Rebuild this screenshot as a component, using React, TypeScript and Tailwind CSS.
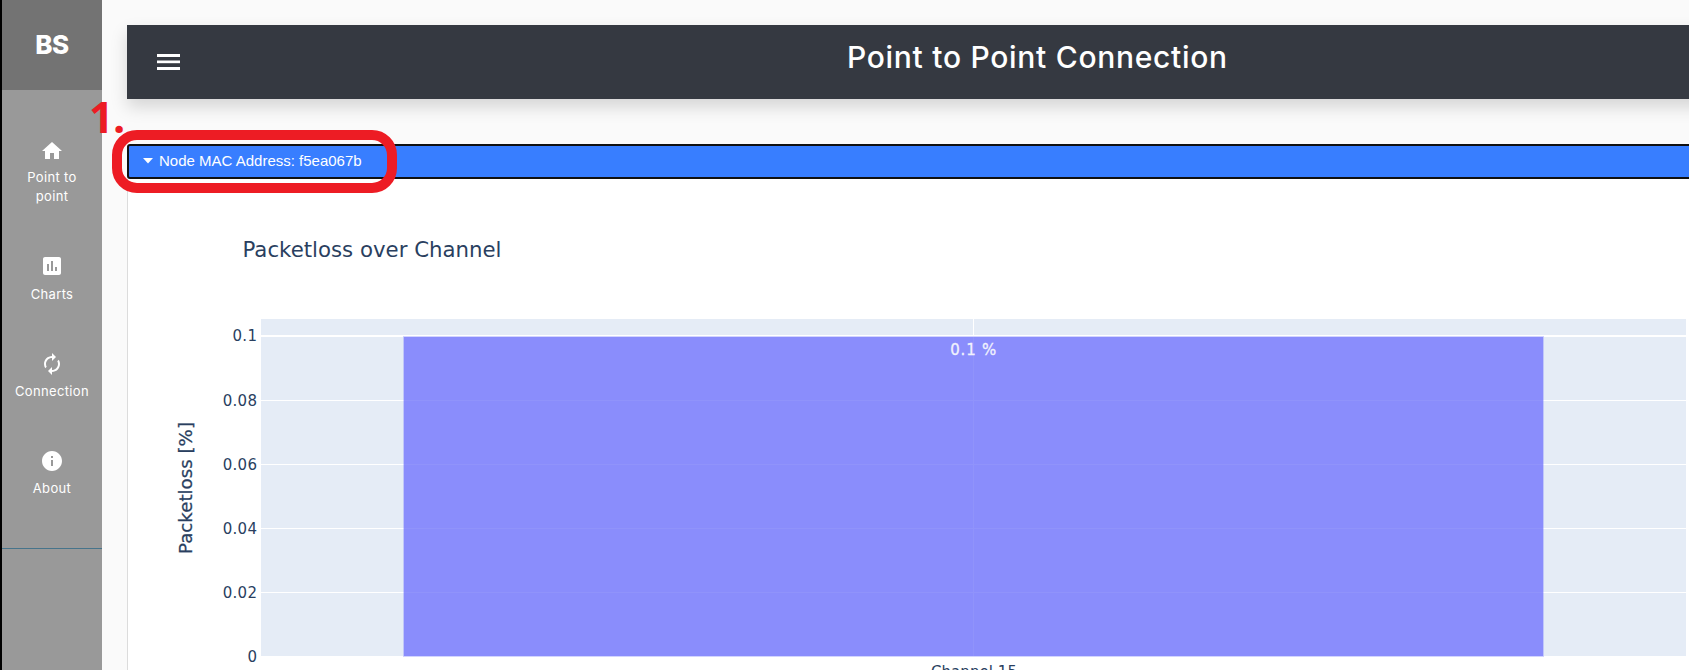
import { MdHome, MdAssessment, MdAutorenew, MdInfo } from "react-icons/md";

const nav = [
  { label: "Point to point", Icon: MdHome, height: "h-[115px]", gap: "mt-[5px]" },
  { label: "Charts", Icon: MdAssessment, height: "h-[98px]", gap: "mt-[7px]" },
  { label: "Connection", Icon: MdAutorenew, height: "h-[97px]", gap: "mt-[6px]" },
  { label: "About", Icon: MdInfo, height: "h-[99px]", gap: "mt-[6px]" },
];

const ticks = [
  { label: "0.1", y: 336 },
  { label: "0.08", y: 400.5 },
  { label: "0.06", y: 464.5 },
  { label: "0.04", y: 528.5 },
  { label: "0.02", y: 592.5 },
  { label: "0", y: 656.5 },
];

function Sidebar() {
  return (
    <aside className="flex w-[102px] shrink-0 flex-col border-l-2 border-black bg-[#999999] font-['Inter',sans-serif] text-white">
      <div className="flex h-[90px] items-center justify-center bg-[#737373] pb-[2px] text-[26px] font-extrabold tracking-[-0.5px]">
        BS
      </div>
      <nav className="flex h-[459px] flex-col border-b border-[#47748b] pt-[49px]">
        {nav.map(({ label, Icon, height, gap }) => (
          <a key={label} className={`flex shrink-0 flex-col items-center ${height}`}>
            <Icon size={24} className="shrink-0" />
            <span className={`w-[78px] text-center text-[13px] leading-[19px] tracking-[0.35px] ${gap}`}>{label}</span>
          </a>
        ))}
      </nav>
    </aside>
  );
}

function Chart() {
  return (
    <svg
      width="1561"
      height="491"
      viewBox="128 179 1561 491"
      className="block font-['DejaVu_Sans',Verdana,sans-serif]"
      fill="#2a3f5f"
    >
      <text x="242.5" y="257" fontSize="21.5" textLength="259" lengthAdjust="spacingAndGlyphs">
        Packetloss over Channel
      </text>
      <rect x="261" y="319" width="1425" height="337" fill="#e5ecf6" />
      <rect x="973" y="319" width="1" height="337" fill="#fff" />
      {ticks.slice(0, 5).map((t, i) => (
        <rect
          key={t.label}
          x="261"
          y={i === 0 ? 335 : t.y - 0.5}
          width="1425"
          height={i === 0 ? 2 : 1}
          fill="#fff"
        />
      ))}
      <rect x="403" y="336" width="1141" height="321" fill="#7f83ff" fillOpacity="0.35" />
      <rect x="404" y="337" width="1139" height="319" fill="#8a8dfc" />
      {ticks.slice(1, 5).map((t) => (
        <rect key={t.label} x="404" y={t.y - 0.5} width="1139" height="1" fill="#9093fb" />
      ))}
      <rect x="973" y="337" width="1" height="319" fill="#9093fb" />
      {ticks.map((t) => (
        <text key={t.label} x="257.3" y={t.y + 5} fontSize="15" letterSpacing="0.3" textAnchor="end">
          {t.label}
        </text>
      ))}
      <text
        x="973.3"
        y="355"
        fontSize="15"
        textAnchor="middle"
        fill="#f1f2fd"
        stroke="#f1f2fd"
        strokeWidth="0.3"
        textLength="46"
      >
        0.1 %
      </text>
      <text x="974" y="676.5" fontSize="15" textAnchor="middle" textLength="86">
        Channel 15
      </text>
      <text
        transform="translate(192 488) rotate(-90)"
        fontSize="17.5"
        textAnchor="middle"
        textLength="132"
        lengthAdjust="spacingAndGlyphs"
        stroke="#2a3f5f"
        strokeWidth="0.25"
      >
        Packetloss [%]
      </text>
    </svg>
  );
}

export default function App() {
  return (
    <div className="relative flex h-[670px] w-[1689px] overflow-hidden bg-[#fafafa]">
      <Sidebar />
      <main className="flex min-w-0 flex-1 flex-col overflow-hidden pt-[25px] pl-[25px]">
        <header className="flex h-[74px] w-[1820px] shrink-0 bg-[#353941] pl-[30px] text-white shadow-[0_8px_16px_rgba(0,0,0,0.15)]">
          <svg width="23" height="16" viewBox="0 0 23 16" className="mt-[29px] shrink-0" fill="currentColor">
            <rect width="23" height="3" />
            <rect y="6.5" width="23" height="2.7" />
            <rect y="13" width="23" height="3" />
          </svg>
          <h1 className="mt-[10px] ml-[667px] text-[30px] leading-[44px] font-medium tracking-[0.71px] whitespace-nowrap font-['Inter',sans-serif]">
            Point to Point Connection
          </h1>
        </header>
        <button className="mt-[45px] flex h-[35px] w-[1820px] shrink-0 items-center rounded-[3px] border-2 border-[#101010] bg-[#387eff] pl-[14px] text-left font-['Liberation_Sans',sans-serif] text-[15px] text-white">
          <svg width="10" height="6" viewBox="0 0 10 6" className="mr-[6px] mb-[2px]" fill="currentColor">
            <path d="M0 0h10L5 5.5z" />
          </svg>
          <span className="whitespace-nowrap">Node MAC Address: f5ea067b</span>
        </button>
        <section className="w-[1820px] shrink-0 border-l border-[#dcdcdc] bg-white">
          <Chart />
        </section>
      </main>
      <div className="absolute top-[130px] left-[112px] h-[63px] w-[285px] rounded-[25px] border-10 border-[#ed1c24]" />
      <span className="absolute top-[87px] left-[89px] text-[43px] leading-[60px] font-bold tracking-[-0.5px] text-[#ed1c24] font-['Open_Sans',sans-serif]">
        1.
      </span>
    </div>
  );
}
